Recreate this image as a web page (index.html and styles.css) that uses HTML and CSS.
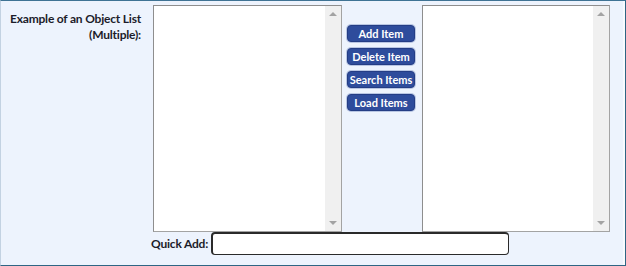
FILE: index.html
```html
<!DOCTYPE html>
<html>
<head>
<meta charset="utf-8">
<link rel="stylesheet" href="styles.css">
</head>
<body>
<div class="frame">
  <div class="row-main">
    <div class="field-label">Example of an Object List<br>(Multiple):</div>
    <div class="listbox">
      <div class="list-area"></div>
      <div class="scrollbar">
        <span class="arrow-up"></span>
        <span class="arrow-down"></span>
      </div>
    </div>
    <div class="actions">
      <button class="btn">Add Item</button>
      <button class="btn">Delete Item</button>
      <button class="btn">Search Items</button>
      <button class="btn">Load Items</button>
    </div>
    <div class="listbox listbox-right">
      <div class="list-area"></div>
      <div class="scrollbar">
        <span class="arrow-up"></span>
        <span class="arrow-down"></span>
      </div>
    </div>
  </div>
  <div class="row-quick">
    <label class="quick-label">Quick Add:</label>
    <input class="quick-input" type="text">
  </div>
</div>
</body>
</html>
```
FILE: styles.css
```css
html, body {
  margin: 0;
  padding: 0;
  background: #ffffff;
}
.frame {
  width: 626px;
  height: 266px;
  box-sizing: border-box;
  background: #edf3fd;
  border-top: 1px solid #3f7394;
  border-right: 1px solid #2f6584;
  border-bottom: 1px solid #2f6584;
  border-left: 1px solid #c3d2e2;
  box-shadow: inset -2px 0 0 #f8fbff;
  font-family: "Lato", "Open Sans", sans-serif;
  color: #1c1c2a;
}
.row-main {
  display: flex;
  align-items: flex-start;
  padding-top: 4px;
}
.field-label {
  width: 140px;
  text-align: right;
  font-weight: bold;
  font-size: 12px;
  letter-spacing: -0.2px;
  line-height: 16px;
  padding-top: 6px;
  box-sizing: border-box;
}
.listbox {
  margin-left: 12px;
  width: 189px;
  height: 227px;
  box-sizing: border-box;
  border: 1px solid #a3a3a3;
  border-top-color: #8e8e8e;
  border-left-color: #8e8e8e;
  background: #ffffff;
  display: flex;
}
.listbox-right {
  margin-left: 7px;
  width: 188px;
}
.list-area {
  flex: 1;
}
.scrollbar {
  width: 16px;
  background: #f0f0f0;
  display: flex;
  flex-direction: column;
  justify-content: space-between;
  align-items: center;
  padding: 6px 0 6px;
}
.arrow-up {
  width: 0;
  height: 0;
  border-left: 4px solid transparent;
  border-right: 4px solid transparent;
  border-bottom: 4px solid #a3a3a3;
}
.arrow-down {
  width: 0;
  height: 0;
  border-left: 4px solid transparent;
  border-right: 4px solid transparent;
  border-top: 4px solid #a3a3a3;
}
.actions {
  margin-left: 5px;
  padding-top: 20px;
  display: flex;
  flex-direction: column;
  gap: 6px;
}
.btn {
  width: 68px;
  height: 17px;
  padding: 0;
  margin: 0;
  border: 1px solid #243d85;
  border-radius: 4px;
  background: #2e4c9c;
  color: #ffffff;
  font-family: "Lato", "Open Sans", sans-serif;
  font-weight: bold;
  font-size: 11px;
  line-height: 15px;
  box-shadow: 0 0 0 1px #b9c6e3;
}
.row-quick {
  display: flex;
  align-items: center;
  padding-left: 150px;
  margin-top: 0;
}
.quick-label {
  font-weight: bold;
  font-size: 12px;
  letter-spacing: -0.2px;
  margin-right: 3px;
}
.quick-input {
  width: 298px;
  height: 23px;
  box-sizing: border-box;
  border: 1px solid #2a2a2a;
  border-top-width: 2px;
  border-left-width: 2px;
  border-radius: 4px;
  background: #ffffff;
  margin: 0;
  padding: 0 4px;
}
```
